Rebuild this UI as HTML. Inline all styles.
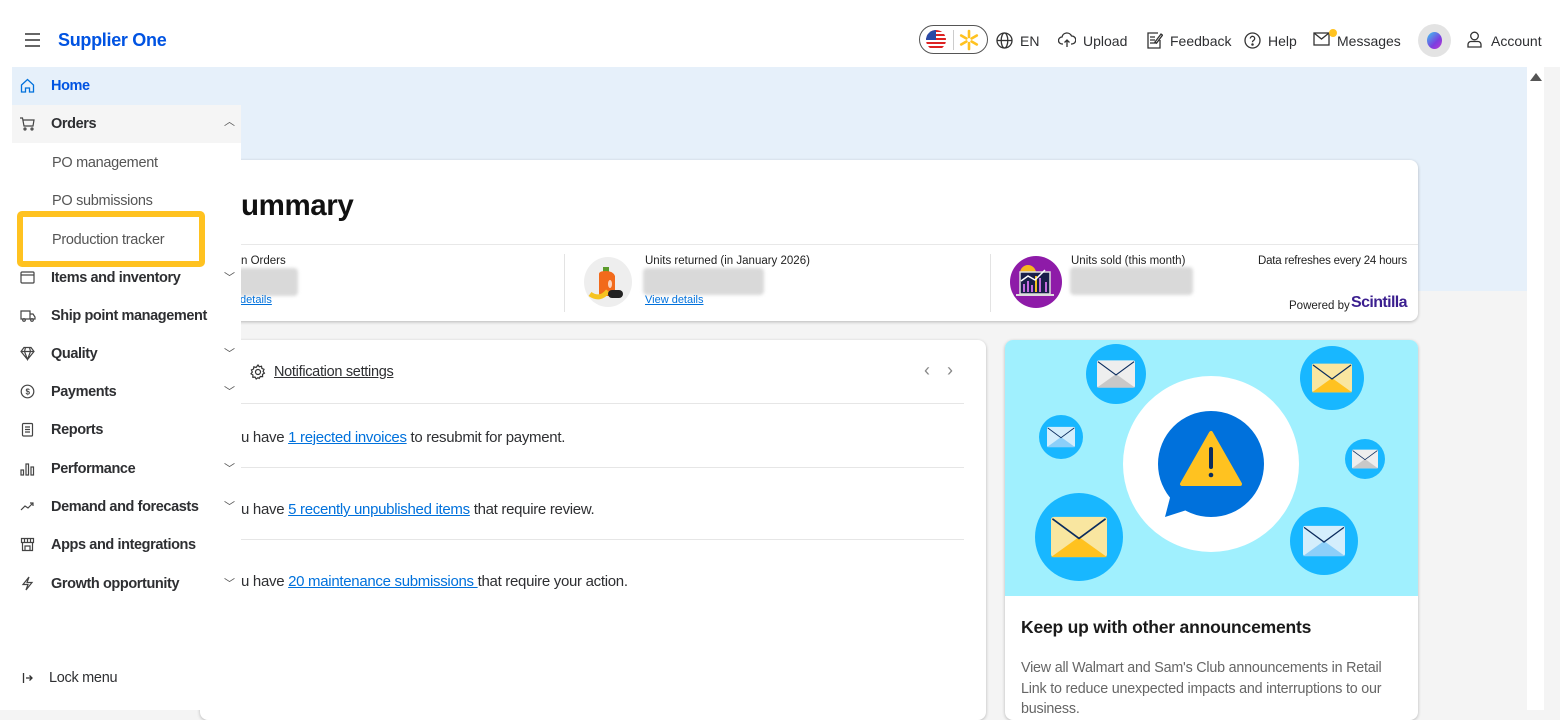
<!DOCTYPE html>
<html><head><meta charset="utf-8"><style>
*{box-sizing:border-box;margin:0;padding:0}
body{width:1560px;height:710px;overflow:hidden;background:#f4f4f4;font-family:"Liberation Sans",sans-serif;color:#2e2f32;position:relative}
.abs{position:absolute}
.hdr{left:0;top:0;width:1560px;height:67px;background:#fff}
.band{left:241px;top:67px;width:1286px;height:224px;background:#e6f0fa}
.scroll{left:1527px;top:67px;width:17px;height:643px;background:#fff}
.side{left:12px;top:67px;width:229px;height:643px;background:#fff}
.leftstrip{left:0;top:67px;width:12px;height:643px;background:#fff}
.nav{position:absolute;left:12px;width:229px;height:38px;font-size:14.5px;font-weight:bold;color:#2e2f32;letter-spacing:-0.4px}
.nav .t{position:absolute;left:39px;top:11px}
.nav svg{position:absolute;left:8px;top:11px}
.nav .ch{position:absolute;left:212px;top:10px;font-size:11px;font-weight:normal;color:#555}
.sub{position:absolute;left:52px;font-size:14.5px;color:#555;letter-spacing:-0.3px}
.card{background:#fff;border-radius:8px;box-shadow:0 1px 3px rgba(0,0,0,.25)}
a{color:#0071dc;text-decoration:underline}
.ttl{font-size:15px;letter-spacing:-0.3px}
.blur{background:#d9d9d9;border-radius:4px;filter:blur(1.5px)}
</style></head><body>
<div class="abs hdr"></div>
<div class="abs band"></div>
<div class="abs scroll"><div style="margin:6px 0 0 3px;width:0;height:0;border-left:6px solid transparent;border-right:6px solid transparent;border-bottom:8px solid #555"></div></div>

<svg class="abs" style="left:25px;top:33px" width="16" height="14"><path d="M0 1h15M0 7h15M0 13h15" stroke="#333" stroke-width="1.5"/></svg>
<div class="abs" style="left:58px;top:30px;font-size:18px;font-weight:bold;color:#0053e2;letter-spacing:-0.3px">Supplier One</div>
<div class="abs" style="left:919px;top:25px;width:69px;height:29px;border:1.5px solid #555;border-radius:15px;background:#fff"></div>
<svg class="abs" style="left:925px;top:29px" width="22" height="22"><defs><clipPath id="c"><circle cx="11" cy="11" r="10"/></clipPath></defs><g clip-path="url(#c)"><rect width="22" height="22" fill="#fff"/><path d="M0 2h22M0 6h22M0 10h22M0 14h22M0 18h22" stroke="#d22" stroke-width="2"/><rect width="11" height="11" fill="#2a4aa6"/></g></svg>
<div class="abs" style="left:953px;top:30px;width:1px;height:20px;background:#ccc"></div>
<svg class="abs" style="left:958px;top:29px" width="22" height="22" viewBox="-11 -11 22 22"><g stroke="#ffc220" stroke-width="2.6" stroke-linecap="round"><path d="M0-3V-9M0 3V9M2.6-1.5L7.8-4.5M-2.6-1.5L-7.8-4.5M2.6 1.5L7.8 4.5M-2.6 1.5L-7.8 4.5"/></g></svg>
<svg class="abs" style="left:996px;top:32px" width="17" height="17" viewBox="0 0 17 17" fill="none" stroke="#333" stroke-width="1.3"><circle cx="8.5" cy="8.5" r="7.5"/><ellipse cx="8.5" cy="8.5" rx="3.3" ry="7.5"/><path d="M1 8.5h15"/></svg>
<div class="abs" style="left:1020px;top:33px;font-size:14px">EN</div>
<svg class="abs" style="left:1058px;top:32px" width="18" height="16" viewBox="0 0 18 16" fill="none" stroke="#333" stroke-width="1.3"><path d="M5 12H4a3.5 3.5 0 010-7 5 5 0 019.5-1A3.5 3.5 0 0114 12h-1M9 15V8M6.5 10.5L9 8l2.5 2.5"/></svg>
<div class="abs" style="left:1083px;top:33px;font-size:14px">Upload</div>
<svg class="abs" style="left:1146px;top:31px" width="17" height="18" viewBox="0 0 17 18" fill="none" stroke="#333" stroke-width="1.3"><path d="M12 2H2v15h12V9M4 6h5M4 9h5M4 12h6M9 11l6-8 1.5 1.2-6 8z"/></svg>
<div class="abs" style="left:1170px;top:33px;font-size:14px">Feedback</div>
<svg class="abs" style="left:1244px;top:32px" width="17" height="17" viewBox="0 0 17 17" fill="none" stroke="#333" stroke-width="1.3"><circle cx="8.5" cy="8.5" r="7.5"/><path d="M6.3 6.5a2.2 2.2 0 114 1.3c-.9.6-1.8 1-1.8 2.4"/><circle cx="8.5" cy="12.5" r=".6" fill="#333"/></svg>
<div class="abs" style="left:1268px;top:33px;font-size:14px">Help</div>
<svg class="abs" style="left:1313px;top:32px" width="17" height="14" viewBox="0 0 17 14" fill="none" stroke="#333" stroke-width="1.3"><rect x="1" y="1" width="15" height="12"/><path d="M1 1l7.5 6L16 1"/></svg>
<div class="abs" style="left:1329px;top:29px;width:8px;height:8px;border-radius:50%;background:#ffc220"></div>
<div class="abs" style="left:1337px;top:33px;font-size:14px">Messages</div>
<div class="abs" style="left:1418px;top:24px;width:33px;height:33px;border-radius:50%;background:#e3e3e3"></div>
<div class="abs" style="left:1427px;top:32px;width:15px;height:17px;border-radius:50%;background:linear-gradient(135deg,#3cc8f0,#7b3fe0 60%,#c03ad0)"></div>
<svg class="abs" style="left:1467px;top:31px" width="15" height="17" viewBox="0 0 15 17" fill="none" stroke="#333" stroke-width="1.3"><circle cx="7.5" cy="5" r="3.8"/><path d="M1 16v-2.5a3 3 0 013-3h7a3 3 0 013 3V16z"/></svg>
<div class="abs" style="left:1491px;top:33px;font-size:14px">Account</div>

<div class="abs card" style="left:200px;top:160px;width:1218px;height:161px">
  <div class="abs" style="left:0;top:84px;width:1218px;height:1px;background:#e8e8e8"></div>
  <div class="abs" style="left:364px;top:94px;width:1px;height:58px;background:#e3e3e3"></div>
  <div class="abs" style="left:790px;top:94px;width:1px;height:58px;background:#e3e3e3"></div>
  <div class="abs" style="left:384px;top:97px;width:48px;height:50px;border-radius:50%;background:#eee"></div>
  <svg class="abs" style="left:386px;top:100px" width="46" height="46"><rect x="17" y="7" width="6" height="5" fill="#5b9b2b"/><path d="M13 14q0-3 7-3t9 5v20H13z" fill="#f26a1b"/><ellipse cx="24" cy="24" rx="2" ry="4" fill="#fff" opacity=".7"/><path d="M4 34q10 7 18-3" stroke="#f6c320" stroke-width="5" fill="none"/><rect x="22" y="30" width="15" height="8" rx="4" fill="#222"/></svg>
  <svg class="abs" style="left:810px;top:96px" width="52" height="52"><circle cx="26" cy="26" r="26" fill="#8e1ba8"/><circle cx="18" cy="17" r="8" fill="#f6b51e"/><rect x="10" y="16" width="30" height="22" fill="#1a1f4a" stroke="#ddd" stroke-width="1.5"/><g fill="#c56be0"><rect x="13" y="28" width="2" height="8"/><rect x="17" y="25" width="2" height="11"/><rect x="21" y="29" width="2" height="7"/><rect x="29" y="22" width="2" height="14"/><rect x="35" y="26" width="2" height="10"/></g><rect x="25" y="20" width="2" height="16" fill="#f6c320"/><path d="M11 25l7-5 7 4 10-10" stroke="#fff" stroke-width="1.5" fill="none"/><rect x="6" y="38" width="38" height="2" fill="#ddd"/></svg>
</div>
<div class="abs" style="left:241px;top:189px;font-size:29.5px;font-weight:bold;color:#111;letter-spacing:-0.4px">ummary</div>
<div class="abs" style="left:241px;top:255px;font-size:11.5px;color:#222">n Orders</div>
<div class="abs blur" style="left:236px;top:268px;width:62px;height:28px"></div>
<div class="abs" style="left:237px;top:294px;font-size:11px"><a>/details</a></div>
<div class="abs" style="left:645px;top:255px;font-size:11.5px;color:#222">Units returned (in January 2026)</div>
<div class="abs blur" style="left:643px;top:268px;width:121px;height:27px"></div>
<div class="abs" style="left:645px;top:294px;font-size:11px"><a>View details</a></div>
<div class="abs" style="left:1071px;top:255px;font-size:11.5px;color:#222">Units sold (this month)</div>
<div class="abs blur" style="left:1070px;top:267px;width:123px;height:28px"></div>
<div class="abs" style="left:1258px;top:255px;font-size:11.5px;color:#222;letter-spacing:-0.2px">Data refreshes every 24 hours</div>
<div class="abs" style="left:1289px;top:300px;font-size:11.5px;color:#222">Powered by</div>
<div class="abs" style="left:1351px;top:294px;font-size:16px;font-weight:bold;color:#3b1f8f;letter-spacing:-0.6px">Scintilla</div>

<div class="abs card" style="left:200px;top:340px;width:786px;height:380px"></div>
<svg class="abs" style="left:250px;top:364px" width="16" height="16" viewBox="0 0 16 16" fill="none" stroke="#333" stroke-width="1.2"><circle cx="8" cy="8" r="2.5"/><path d="M8 1l1.3 1.8 2.2-.6.4 2.2 2.1.9-.9 2.1 1.3 1.8-1.9 1.1.1 2.3-2.3-.1-1.1 1.9L8 13.7l-1.8 1.3-1.1-1.9-2.3.1.1-2.3L1 9.8l1.3-1.8-.9-2.1 2.1-.9.4-2.2 2.2.6z"/></svg>
<div class="abs ttl" style="left:274px;top:364px;font-size:14.5px;color:#2e2f32;text-decoration:underline">Notification settings</div>
<div class="abs" style="left:924px;top:360px;font-size:18px;color:#888">‹</div>
<div class="abs" style="left:947px;top:360px;font-size:18px;color:#888">›</div>
<div class="abs" style="left:241px;top:403px;width:723px;height:1px;background:#e6e6e6"></div>
<div class="abs" style="left:241px;top:467px;width:723px;height:1px;background:#e6e6e6"></div>
<div class="abs" style="left:241px;top:539px;width:723px;height:1px;background:#e6e6e6"></div>
<div class="abs ttl" style="left:241px;top:429px">u have <a>1 rejected invoices</a> to resubmit for payment.</div>
<div class="abs ttl" style="left:241px;top:501px">u have <a>5 recently unpublished items</a> that require review.</div>
<div class="abs ttl" style="left:241px;top:573px">u have <a>20 maintenance submissions </a>that require your action.</div>

<div class="abs card" style="left:1005px;top:340px;width:413px;height:380px;overflow:hidden">
<svg width="413" height="256" style="display:block"><rect width="413" height="256" fill="#a0f0fe"/>
<g transform="translate(-1005,-340)">
<circle cx="1211" cy="464" r="88" fill="#fff"/>
<circle cx="1211" cy="464" r="53" fill="#0071dc"/><path d="M1172 490l-7 27 28-9z" fill="#0071dc"/>
<path d="M1211 433l-29 51h58z" fill="#ffc220" stroke="#ffc220" stroke-width="4" stroke-linejoin="round"/>
<path d="M1211 449v18" stroke="#0b2c5e" stroke-width="4" stroke-linecap="round"/><circle cx="1211" cy="475" r="2.3" fill="#0b2c5e"/>
<g fill="#18b7ff"><circle cx="1116" cy="374" r="30"/><circle cx="1332" cy="378" r="32"/><circle cx="1061" cy="437" r="22"/><circle cx="1365" cy="459" r="20"/><circle cx="1079" cy="537" r="44"/><circle cx="1324" cy="541" r="34"/></g>
<g id="e"><rect x="-1" y="-0.72" width="2" height="1.44" rx=".1" fill="#eee"/><path d="M-1 .72L0 0l1 .72z" fill="#c8c8c8"/><path d="M-.95-.65L0 .05.95-.65" stroke="#0b2c5e" stroke-width=".06" fill="none"/></g>
<use href="#e" transform="translate(1116,374) scale(19)"/>
<use href="#e" transform="translate(1365,459) scale(13)"/>
<g transform="translate(1332,378) scale(20)"><rect x="-1" y="-0.72" width="2" height="1.44" rx=".1" fill="#f9e6a0"/><path d="M-1 .72L0 0l1 .72z" fill="#ffc220"/><path d="M-.95-.65L0 .05.95-.65" stroke="#0b2c5e" stroke-width=".06" fill="none"/></g>
<g transform="translate(1079,537) scale(28)"><rect x="-1" y="-0.72" width="2" height="1.44" rx=".1" fill="#f9e6a0"/><path d="M-1 .72L0 0l1 .72z" fill="#ffc220"/><path d="M-.95-.65L0 .05.95-.65" stroke="#0b2c5e" stroke-width=".06" fill="none"/></g>
<g transform="translate(1061,437) scale(14)"><rect x="-1" y="-0.72" width="2" height="1.44" rx=".1" fill="#d4eefc"/><path d="M-1 .72L0 0l1 .72z" fill="#8ccff9"/><path d="M-.95-.65L0 .05.95-.65" stroke="#0b2c5e" stroke-width=".06" fill="none"/></g>
<g transform="translate(1324,541) scale(21)"><rect x="-1" y="-0.72" width="2" height="1.44" rx=".1" fill="#d4eefc"/><path d="M-1 .72L0 0l1 .72z" fill="#8ccff9"/><path d="M-.95-.65L0 .05.95-.65" stroke="#0b2c5e" stroke-width=".06" fill="none"/></g>
</g></svg>
<div style="position:absolute;left:16px;top:277px;font-size:17.5px;font-weight:bold;color:#1a1a1a;letter-spacing:-0.2px">Keep up with other announcements</div>
<div style="position:absolute;left:16px;top:318px;width:376px;font-size:14.3px;line-height:20.5px;color:#666;letter-spacing:-0.2px">View all Walmart and Sam's Club announcements in Retail Link to reduce unexpected impacts and interruptions to our business.</div>
</div>

<div class="abs leftstrip"></div>
<div class="abs side"></div>
<div class="abs" style="left:12px;top:67px;width:229px;height:38px;background:#e6f0fa"></div>
<div class="abs" style="left:12px;top:105px;width:229px;height:38px;background:#f5f5f5"></div>
<div class="nav" style="top:67px;color:#0053e2"><svg width="15" height="15" viewBox="0 0 15 15" fill="none" stroke="#0071dc" stroke-width="1.3"><path d="M1.5 7L7.5 1.5 13.5 7V14H9.5V10h-4v4h-4z"/></svg><span class="t">Home</span></div>
<div class="nav" style="top:105px"><svg width="15" height="15" viewBox="0 0 15 15" fill="none" stroke="#444" stroke-width="1.2"><path d="M0 2h2.5l1.5 8h9l1-6H3.3"/><circle cx="5" cy="13" r="1"/><circle cx="12" cy="13" r="1"/></svg><span class="t">Orders</span><span class="ch" style="top:8px">︿</span></div>
<div class="sub" style="top:155px">PO management</div>
<div class="sub" style="top:193px">PO submissions</div>
<div class="sub" style="top:232px">Production tracker</div>
<div class="abs" style="left:17px;top:211px;width:188px;height:56px;border:6px solid #ffc220;border-radius:5px"></div>
<div class="nav" style="top:259px"><svg width="15" height="15" viewBox="0 0 15 15" fill="none" stroke="#444" stroke-width="1.2"><rect x="1" y="2" width="13" height="11" rx="1"/><path d="M1 5h13"/></svg><span class="t">Items and inventory</span><span class="ch">﹀</span></div>
<div class="nav" style="top:297px"><svg width="16" height="15" viewBox="0 0 16 15" fill="none" stroke="#444" stroke-width="1.2"><path d="M1 3h9v8H1zM10 6h3l2 3v2h-5"/><circle cx="4" cy="12" r="1.3"/><circle cx="12" cy="12" r="1.3"/></svg><span class="t">Ship point management</span></div>
<div class="nav" style="top:335px"><svg width="15" height="15" viewBox="0 0 15 15" fill="none" stroke="#444" stroke-width="1.2"><path d="M4 1.5h7l3 4-6.5 8L1 5.5zM1 5.5h13M5.5 1.5L4.5 5.5l3 8 3-8-1-4"/></svg><span class="t">Quality</span><span class="ch">﹀</span></div>
<div class="nav" style="top:373px"><svg width="15" height="15" viewBox="0 0 15 15" fill="none" stroke="#444" stroke-width="1.2"><circle cx="7.5" cy="7.5" r="6.3"/><text x="7.5" y="10.3" font-size="8" text-anchor="middle" fill="#444" stroke="none" font-family="Liberation Sans">$</text></svg><span class="t">Payments</span><span class="ch">﹀</span></div>
<div class="nav" style="top:411px"><svg width="15" height="15" viewBox="0 0 15 15" fill="none" stroke="#444" stroke-width="1.2"><rect x="2.5" y="1.5" width="10" height="12.5" rx="1"/><path d="M5 5h5M5 7.5h5M5 10h5"/></svg><span class="t">Reports</span></div>
<div class="nav" style="top:450px"><svg width="15" height="15" viewBox="0 0 15 15" fill="none" stroke="#444" stroke-width="1.2"><rect x="1" y="9" width="2.5" height="5"/><rect x="6" y="3" width="2.5" height="11"/><rect x="11" y="6" width="2.5" height="8"/></svg><span class="t">Performance</span><span class="ch">﹀</span></div>
<div class="nav" style="top:488px"><svg width="15" height="15" viewBox="0 0 15 15" fill="none" stroke="#444" stroke-width="1.2"><path d="M1 11l4-4 3 2 5-5M10 4h3v3"/></svg><span class="t">Demand and forecasts</span><span class="ch">﹀</span></div>
<div class="nav" style="top:526px"><svg width="15" height="15" viewBox="0 0 15 15" fill="none" stroke="#444" stroke-width="1.2"><path d="M1.5 1.5h12v4h-12zM2.5 5.5v8h10v-8M4.5 1.5v4M7.5 1.5v4M10.5 1.5v4M5 9h5v4.5H5z"/></svg><span class="t">Apps and integrations</span></div>
<div class="nav" style="top:565px"><svg width="15" height="15" viewBox="0 0 15 15" fill="none" stroke="#444" stroke-width="1.2"><path d="M9 1L3 8.5h5L6 14l6-7.5H7z"/></svg><span class="t">Growth opportunity</span><span class="ch">﹀</span></div>
<svg class="abs" style="left:22px;top:672px" width="12" height="12" viewBox="0 0 12 12" fill="none" stroke="#333" stroke-width="1.3"><path d="M1.5 1v10M4 6h6M7.5 3.5L10 6 7.5 8.5"/></svg>
<div class="abs" style="left:49px;top:670px;font-size:14.5px;color:#2e2f32;letter-spacing:-0.3px">Lock menu</div>
</body></html>
